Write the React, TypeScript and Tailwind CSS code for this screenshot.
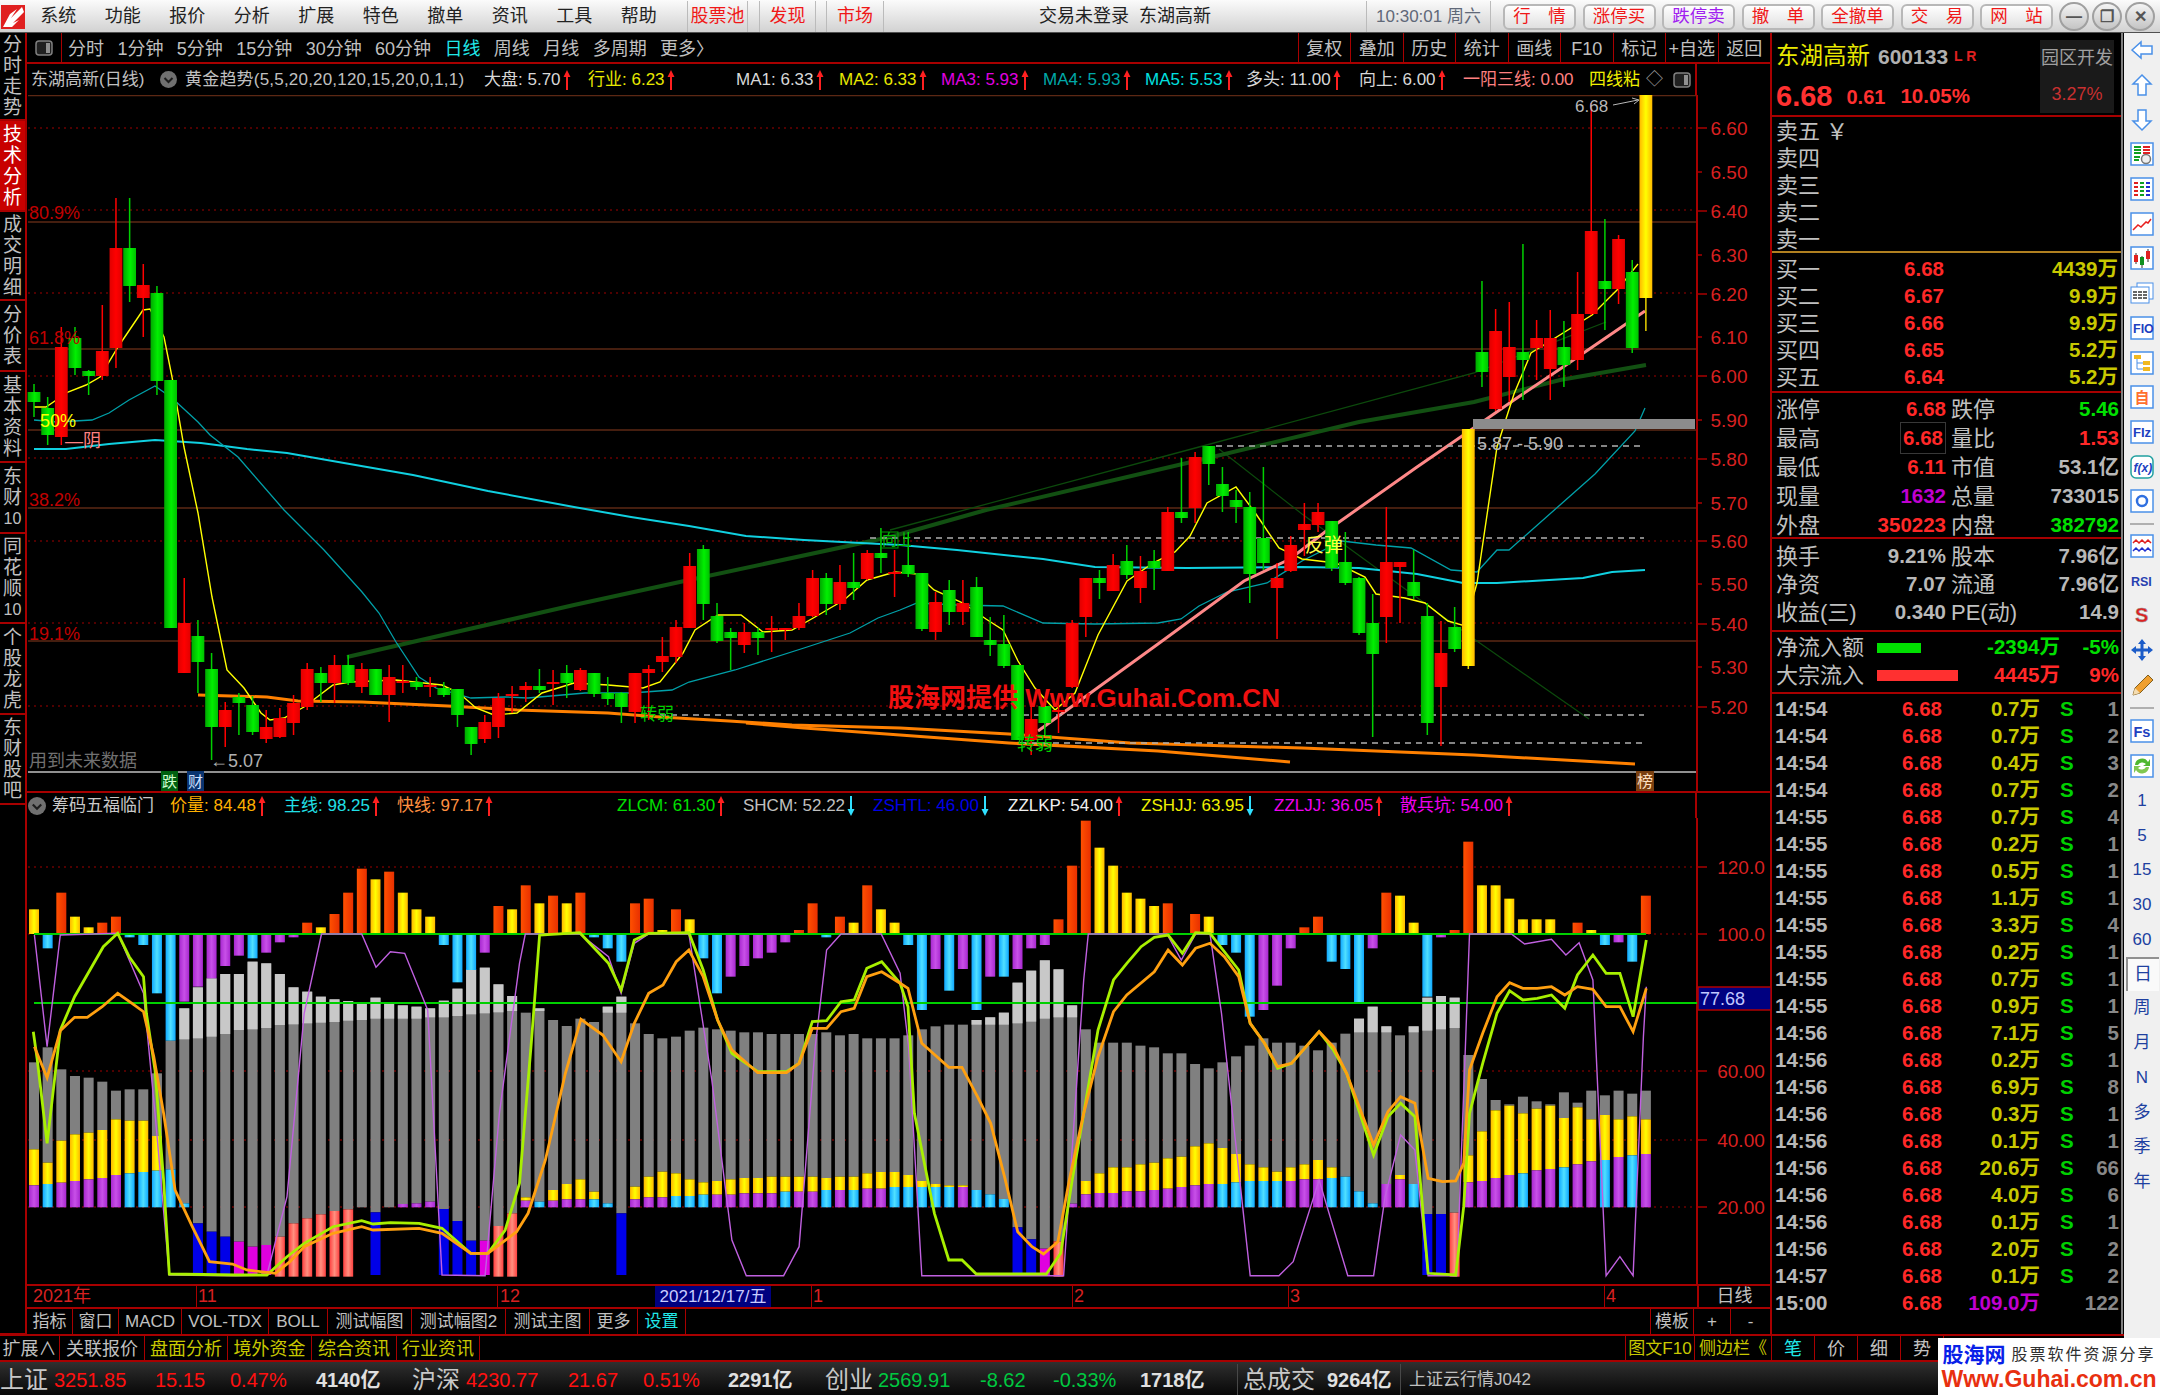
import type { ReactNode } from 'react'

const X = (i: number) => 34 + 13.66 * i

// [colour, wickTop, bodyTop, bodyBottom, wickBottom] in page pixels
const candles: [string, number, number, number, number][] = [
  ['g',384,392,402,417],['g',397,408,435,445],['r',327,347,437,445],['g',327,338,368,375],['g',370,371,376,395],
  ['r',305,351,376,380],['r',198,248,348,368],['g',198,248,286,302],['r',264,285,298,337],['g',286,293,381,395],
  ['g',380,380,628,628],['r',578,623,673,673],['g',620,636,662,693],['g',653,669,727,760],['r',702,710,727,747],
  ['g',693,697,703,735],['g',696,705,732,735],['r',710,727,739,743],['r',708,718,737,738],['r',695,703,723,735],
  ['r',663,669,707,710],['g',667,673,683,702],['r',655,665,683,703],['g',655,665,683,685],['r',663,669,687,693],
  ['g',669,669,695,695],['r',665,677,695,722],['r',665,681,683,693],['g',677,682,687,690],['r',677,685,686,697],
  ['g',682,688,695,697],['g',689,689,715,727],['g',727,727,744,755],['r',715,722,739,743],['r',693,698,727,738],
  ['r',686,694,695,713],['r',682,686,690,702],['g',669,686,690,693],['r',670,682,683,705],['g',665,673,683,698],
  ['r',668,670,690,691],['g',673,673,694,697],['g',677,693,699,705],['g',692,693,707,723],['r',673,673,712,723],
  ['r',665,669,673,720],['r',637,656,662,672],['r',620,627,657,663],['r',553,566,628,628],['g',545,549,604,620],
  ['g',603,616,641,643],['g',628,632,638,670],['r',623,632,645,653],['g',628,632,638,655],['r',616,628,629,652],
  ['r',628,628,629,640],['r',603,616,628,630],['r',570,578,616,617],['g',573,578,604,615],['r',565,582,604,610],
  ['g',553,582,588,600],['r',550,553,579,580],['g',528,553,558,573],['r',550,572,573,597],['g',532,565,574,577],
  ['g',573,573,629,631],['r',592,602,632,640],['g',580,590,612,625],['r',580,603,612,625],['g',577,587,637,637],
  ['g',617,640,645,656],['g',615,644,666,668],['g',665,665,740,740],['r',703,719,740,755],['g',701,706,723,735],
  ['r',695,710,712,733],['r',620,623,687,688],['r',578,578,617,637],['g',570,578,583,599],['r',554,565,591,591],
  ['g',545,561,575,579],['r',556,571,588,603],['g',550,561,568,590],['r',507,512,571,571],['g',458,512,518,523],
  ['r',452,457,508,523],['g',446,446,464,485],['g',467,484,496,512],['g',490,500,507,523],['g',492,507,574,603],
  ['g',467,538,563,570],['r',563,578,588,639],['r',536,545,571,572],['r',503,524,530,556],['r',503,512,525,532],
  ['g',521,521,568,571],['g',532,562,583,585],['g',577,578,633,635],['g',594,623,654,737],['r',507,562,617,643],
  ['r',562,562,567,623],['g',550,582,596,599],['g',603,616,723,735],['r',621,653,687,746],['g',607,627,649,652],
  ['y',429,429,666,669],['g',281,352,372,387],['r',309,331,409,411],['r',302,347,377,402],['g',244,352,360,400],
  ['r',320,338,348,380],['r',310,338,369,400],['g',321,347,365,387],['r',272,314,360,370],['r',103,231,314,315],
  ['g',219,281,289,330],['r',235,239,289,304],['g',260,272,348,353],['y',95,95,298,331],
]

const volume = 'y388 c505 o338 y410 y442 o428 o410 c472 c495 c640 c782 p665 p620 p595 p558 p527 c535 p518 p487 p472 o428 y442 o402 o338 o266 y298 o275 y338 y388 y410 c495 c607 c570 p518 o378 y388 o316 y370 o347 y370 o338 c472 c505 c545 o370 o356 y450 o388 y418 c535 c640 p590 p558 p535 p518 p487 o450 o370 c472 o410 y428 o316 y388 y428 c495 c690 p567 c632 p567 c690 p590 c590 p567 p505 p495 o418 o257 o122 y203 y257 y338 y356 y378 o370 n o402 y410 c495 c518 c710 p690 p617 p505 o442 o410 c545 c567 c668 p505 o338 y347 y428 c650 p472 o450 o185 y316 y316 y356 y418 y418 y418 n o428 y450 c495 p487 c545 o347'.split(' ')

// [gray top, light gray end, yellow top, colour top, colour]
const stacks: [number, number, number, number, string][] = [
  [847,0,1108,1216,'p'],[802,0,1148,1212,'c'],[868,0,1082,1208,'p'],[888,0,1063,1203,'p'],[893,0,1058,1198,'p'],
  [905,0,1050,1194,'p'],[932,0,1018,1185,'p'],[928,0,1022,1180,'c'],[928,0,1022,1176,'c'],[880,0,1068,1172,'c'],
  [782,0,0,1168,'c'],[685,778,0,1270,'c'],[622,775,0,1330,'b'],[595,770,0,1355,'b'],[582,762,0,1370,'b'],
  [582,750,0,1385,'m'],[545,748,0,1400,'m'],[550,744,0,1395,'m'],[582,735,0,1370,'k'],[622,733,0,1330,'k'],
  [635,730,0,1315,'k'],[650,728,0,1303,'k'],[658,726,0,1293,'k'],[663,722,0,1288,'k'],[670,720,0,1282,'n'],
  [653,716,0,1297,'b'],[670,716,0,1282,'n'],[676,716,0,1272,'p'],[680,716,0,1270,'p'],[685,712,0,1265,'p'],
  [662,712,0,1287,'b'],[626,708,0,1323,'b'],[568,703,0,1382,'b'],[563,700,0,1382,'m'],[613,697,0,1338,'k'],
  [648,693,0,1300,'k'],[698,0,1252,1262,'p'],[685,693,0,1265,'c'],[720,0,1230,1262,'p'],[738,0,1212,1258,'p'],
  [716,0,1198,1258,'p'],[726,0,1235,1258,'c'],[680,698,0,1270,'c'],[650,698,0,1300,'b'],[730,0,1220,1258,'p'],
  [762,0,1190,1252,'p'],[775,0,1175,1252,'p'],[770,0,1180,1248,'c'],[752,0,1198,1248,'c'],[743,0,1207,1244,'c'],
  [748,0,1203,1244,'p'],[752,0,1198,1244,'p'],[757,0,1194,1240,'p'],[757,0,1194,1240,'p'],[762,0,1190,1240,'p'],
  [762,0,1190,1235,'c'],[762,0,1190,1235,'p'],[762,0,1190,1235,'p'],[757,0,1194,1230,'c'],[766,0,1190,1230,'p'],
  [762,0,1190,1230,'c'],[775,0,1180,1226,'p'],[775,0,1176,1226,'p'],[775,0,1176,1221,'c'],[766,0,1185,1221,'c'],
  [748,0,1203,1221,'c'],[739,0,1212,1221,'c'],[734,0,1216,1221,'c'],[734,0,1216,1221,'p'],[720,734,0,1230,'c'],
  [712,734,0,1243,'c'],[698,734,0,1257,'c'],[608,730,0,1342,'b'],[572,725,0,1378,'b'],[541,716,0,1406,'m'],
  [568,712,0,1384,'k'],[676,712,0,1271,'p'],[748,0,1203,1243,'p'],[788,0,1180,1239,'p'],[788,0,1162,1239,'p'],
  [788,0,1162,1234,'p'],[797,0,1153,1234,'p'],[802,0,1148,1230,'p'],[820,0,1135,1226,'p'],[820,0,1130,1221,'p'],
  [852,0,1099,1216,'p'],[865,0,1090,1212,'p'],[847,0,1104,1212,'c'],[829,0,1122,1207,'c'],[797,0,1153,1203,'c'],
  [775,0,1162,1203,'c'],[788,0,1175,1203,'c'],[788,0,1162,1203,'p'],[797,0,1153,1198,'p'],[811,0,1140,1198,'p'],
  [788,0,1162,1194,'c'],[761,0,1190,1190,'c'],[716,757,0,1234,'c'],[680,757,0,1270,'c'],[739,757,0,1212,'p'],
  [766,0,1185,1198,'p'],[739,757,0,1212,'c'],[653,752,0,1302,'b'],[648,748,0,1302,'b'],[653,744,0,1298,'k'],
  [825,0,1126,1207,'p'],[897,0,1054,1203,'p'],[960,0,991,1194,'p'],[973,0,977,1185,'p'],[950,0,1000,1180,'c'],
  [964,0,986,1171,'p'],[973,0,977,1167,'p'],[937,0,1014,1162,'c'],[968,0,982,1153,'p'],[932,0,1018,1144,'p'],
  [946,0,1005,1140,'c'],[932,0,1018,1131,'p'],[941,0,1009,1126,'c'],[932,0,1018,1122,'p'],
]

const fromLeft = (s: string) =>
  s.split(' ').map(p => { const [a, b] = p.split(',').map(Number); return `${(a / 1.742).toFixed(1)},${(780 + b / 3).toFixed(1)}` }).join(' ')
const fromRight = (s: string) =>
  s.split(' ').map(p => { const [a, b] = p.split(',').map(Number); return `${(900 + a / 1.742).toFixed(1)},${(780 + b / 3).toFixed(1)}` }).join(' ')

const orangeK = fromLeft('60,800 82,893 105,752 130,712 152,712 178,680 205,640 230,670 250,695 268,830 285,1000 305,1230 335,1340 365,1445 405,1452 430,1470 480,1480 505,1445 530,1400 580,1360 630,1340 650,1350 730,1345 770,1360 820,1420 850,1420 900,1355 920,1300 950,1140 985,880 1012,718 1050,765 1082,845 1105,730 1130,640 1155,615 1178,545 1200,510 1225,590 1250,720 1275,810 1320,878 1370,878 1392,850 1415,745 1440,745 1465,695 1488,685 1510,590 1536,575 1568,610') + ' ' +
  fromRight('14,625 38,790 85,862 108,862 135,950 158,1030 182,1190 205,1355 230,1400 250,1422 275,1385 295,1200 320,1000 345,830 372,695 395,645 443,575 467,510 492,555 515,505 540,490 565,530 590,590 610,730 635,790 658,860 682,850 730,755 755,800 778,880 825,1095 850,995 872,950 897,970 920,1195 945,1205 968,1203 982,1150 992,870 1015,760 1040,650 1062,608 1085,625 1110,625 1135,620 1158,645 1180,620 1207,628 1230,680 1254,680 1277,755 1300,625')
const limeK = fromLeft('58,755 65,840 82,1090 105,750 130,650 180,500 205,460 225,530 250,590 255,700 270,870 285,1200 295,1482 410,1485 465,1485 500,1430 530,1390 580,1340 630,1322 650,1332 680,1328 730,1330 770,1345 820,1420 850,1420 880,1350 905,1210 925,800 940,465 1010,458 1060,550 1082,630 1105,480 1130,460 1200,458 1225,570 1250,720 1275,820 1320,875 1370,875 1392,850 1415,725 1440,722 1465,665 1488,660 1510,565 1536,545 1568,610') + ' ' +
  fromRight('14,680 25,1000 60,1300 85,1440 108,1440 133,1482 255,1482 280,1420 300,1200 325,950 345,750 372,600 395,550 420,500 443,472 467,465 492,520 515,458 540,460 590,570 610,730 635,790 658,865 682,850 730,755 755,810 778,880 825,1125 850,1010 872,970 897,1010 920,1480 968,1485 982,1280 992,1000 1015,850 1040,700 1062,632 1085,660 1110,655 1135,645 1158,685 1180,585 1207,525 1230,580 1254,580 1277,710 1300,480')
const purpleK = fromLeft('60,465 82,800 105,465 205,460 250,640 270,1000 295,1485 410,1487 465,1485 500,1250 530,700 560,462 630,462 655,562 680,515 705,520 745,690 770,1485 845,1487 870,1000 905,550 915,462 1010,462 1060,530 1082,640 1105,490 1130,462 1200,462 1240,900 1275,1380 1300,1487 1365,1487 1392,1400 1420,800 1440,510 1465,462 1535,462 1568,580') + ' ' +
  fromRight('15,800 38,1487 285,1487 320,600 328,462 465,462 490,540 515,462 540,462 560,700 610,1487 660,1487 685,1445 730,1200 780,1487 825,1487 845,1250 872,1065 897,1110 920,1487 970,1487 985,800 992,462 1065,462 1088,492 1135,478 1160,525 1183,488 1207,600 1230,1487 1254,1430 1277,1487 1295,770 1300,620')

const maYellow = '34,407 46,407 68,392 86,385 100,377 118,347 143,310 150,309 164,337 172,377 184,447 198,513 212,597 227,670 244,688 261,713 270,720 284,718 304,707 333,685 350,682 396,680 442,685 459,693 476,708 494,715 517,713 542,693 574,683 608,685 643,688 660,682 683,653 695,630 718,615 741,615 763,632 792,630 815,617 844,600 867,580 895,572 917,574 934,590 963,603 986,619 1003,630 1018,661 1035,688 1055,710 1075,693 1098,635 1127,581 1153,563 1175,552 1190,536 1207,503 1236,487 1256,514 1279,548 1302,559 1336,563 1365,577 1376,594 1405,598 1425,603 1448,621 1465,626 1477,583 1497,447 1514,394 1531,353 1592,315 1618,289 1638,264'
const maTeal = '34,420 57,422 92,420 109,413 129,400 155,386 172,398 198,422 210,435 238,457 284,510 324,550 362,592 379,613 396,642 419,677 436,688 471,698 505,697 528,698 585,693 631,693 672,690 689,682 735,670 804,648 850,633 878,618 900,610 917,603 957,605 1003,606 1043,623 1095,624 1158,623 1181,619 1199,606 1227,592 1267,583 1302,561 1342,541 1376,545 1411,548 1451,570 1477,572 1497,550 1509,550 1560,505 1595,474 1635,431 1645,408'
const maCyan = '34,449 66,449 109,444 155,440 201,443 247,449 287,453 344,463 413,475 488,491 574,507 631,517 689,526 746,536 804,540 861,543 900,545 957,550 1043,559 1095,567 1187,568 1302,567 1359,568 1417,574 1463,583 1497,583 1549,580 1583,578 1612,572 1645,570'
const orangeA = '198,695 267,697 298,701 362,702 448,706 517,710 608,713 660,717 729,721 792,725 900,728 1009,734 1130,743 1302,748 1474,755 1635,764'
const orangeB = '746,723 804,728 900,735 1009,743 1158,751 1290,762'
const pinkLine = '1038,731 1158,644 1244,581 1290,559 1325,532 1417,467 1465,434 1514,400 1566,365 1645,311'
const greenThick = '347,657 574,605 689,580 890,537 986,510 1187,463 1359,422 1474,402 1560,380 1646,365'
const greenThin = '890,530 1199,447 1474,373 1606,322'
const greenDown = '1219,449 1302,514 1474,639 1589,719'

const dotted = [128, 210, 293, 376, 458, 541, 623, 706]
const solid = [222, 349, 430, 508, 641]
const priceAxis: [string, number][] = [['6.60',128],['6.50',172],['6.40',211],['6.30',255],['6.20',294],['6.10',337],['6.00',376],['5.90',420],['5.80',459],['5.70',503],['5.60',541],['5.50',584],['5.40',624],['5.30',667],['5.20',707]]

const ChartDefs = () => (
  <defs>
    <linearGradient id="cr"><stop offset="0" stopColor="#e00000" /><stop offset="0.5" stopColor="#ff0000" /><stop offset="1" stopColor="#e00000" /></linearGradient>
    <linearGradient id="cg"><stop offset="0" stopColor="#00a800" /><stop offset="0.55" stopColor="#00f000" /><stop offset="1" stopColor="#00c000" /></linearGradient>
    <linearGradient id="cy"><stop offset="0" stopColor="#ffb800" /><stop offset="0.5" stopColor="#ffff00" /><stop offset="1" stopColor="#ffb800" /></linearGradient>
    <linearGradient id="bo"><stop offset="0" stopColor="#ff5000" /><stop offset="1" stopColor="#e83000" /></linearGradient>
    <linearGradient id="bc"><stop offset="0" stopColor="#10a8ff" /><stop offset="0.5" stopColor="#50e0ff" /><stop offset="1" stopColor="#10a8ff" /></linearGradient>
    <linearGradient id="bp"><stop offset="0" stopColor="#a828d0" /><stop offset="0.5" stopColor="#c850e8" /><stop offset="1" stopColor="#a828d0" /></linearGradient>
    <linearGradient id="bk"><stop offset="0" stopColor="#ff4040" /><stop offset="0.5" stopColor="#ff9080" /><stop offset="1" stopColor="#ff4040" /></linearGradient>
  </defs>
)

function PriceChart() {
  return (
    <svg viewBox="27 95 1745 696" className="block h-[696px] w-[1745px] shrink-0">
      <ChartDefs />
      {dotted.map(y => <line key={y} x1="28" x2="1697" y1={y} y2={y} stroke="#a00000" strokeDasharray="2 4" />)}
      {solid.map(y => <line key={y} x1="28" x2="1697" y1={y} y2={y} stroke="#5c2814" strokeWidth="1.5" />)}
      <line x1="28" x2="1697" y1="95.5" y2="95.5" stroke="#5c2814" strokeWidth="1.5" />
      <line x1="1697" x2="1697" y1="95" y2="791" stroke="#a80000" strokeWidth="2" />
      {priceAxis.map(([t, y], i) => (
        <g key={t}>
          <line x1="1697" x2={i % 2 ? 1702 : 1707} y1={y} y2={y} stroke="#a80000" strokeWidth="1.5" />
          <text x="1729" y={y + 7} textAnchor="middle" fontSize="19" fill="#d82020">{t}</text>
        </g>
      ))}
      <line x1="28" x2="1696" y1="772" y2="772" stroke="#909090" strokeWidth="2" />
      <polyline points={greenThin} fill="none" stroke="#0c4a0c" strokeWidth="1.3" />
      <polyline points={greenDown} fill="none" stroke="#0c4a0c" strokeWidth="1.2" />
      <polyline points={greenThick} fill="none" stroke="#125012" strokeWidth="4" />
      <polyline points={maCyan} fill="none" stroke="#10d0e0" strokeWidth="2" />
      <polyline points={maTeal} fill="none" stroke="#00a0a8" strokeWidth="1.3" />
      <polyline points={orangeA} fill="none" stroke="#ff8000" strokeWidth="3" />
      <polyline points={orangeB} fill="none" stroke="#ff8000" strokeWidth="3" />
      <polyline points={pinkLine} fill="none" stroke="#ff8888" strokeWidth="3" />
      <polyline points={maYellow} fill="none" stroke="#ffff00" strokeWidth="1.4" />
      {[[1216, 446], [870, 538], [660, 715], [1020, 743]].map(([x, y]) => (
        <line key={y} x1={x} x2="1644" y1={y} y2={y} stroke="#b0b0b0" strokeWidth="1.5" strokeDasharray="6 5" />
      ))}
      <rect x="1473" y="419" width="222" height="10" fill="#8c8c8c" />
      {candles.map(([c, wt, bt, bb, wb], i) => {
        const x = X(i)
        const fill = c === 'r' ? '#ff0000' : c === 'g' ? '#00d000' : '#e8d000'
        return (
          <g key={i}>
            <rect x={x - 0.75} y={wt} width="1.5" height={wb - wt} fill={fill} />
            <rect x={x - 6.4} y={bt} width="12.8" height={Math.max(bb - bt, 2)} fill={`url(#c${c})`} />
          </g>
        )
      })}
      <text x="29" y="219" fontSize="18" fill="#c00000">80.9%</text>
      <text x="29" y="344" fontSize="18" fill="#c00000">61.8%</text>
      <text x="40" y="427" fontSize="18" fill="#ffff00">50%</text>
      <text x="65" y="447" fontSize="18" fill="#ff8080">—阴</text>
      <text x="29" y="506" fontSize="18" fill="#c00000">38.2%</text>
      <text x="29" y="640" fontSize="18" fill="#c00000">19.1%</text>
      <text x="29" y="767" fontSize="18" fill="#707070">用到未来数据</text>
      <text x="210" y="767" fontSize="18" fill="#b0b0b0">←5.07</text>
      <text x="640" y="720" fontSize="17" fill="#00d000">转弱</text>
      <rect x="881" y="532" width="17" height="16" fill="none" stroke="#00a000" />
      <text x="882" y="545" fontSize="15" fill="#00c000">向上</text>
      <text x="1305" y="552" fontSize="19" fill="#ffff40">反弹</text>
      <text x="1017" y="750" fontSize="18" fill="#00d000">转弱</text>
      <text x="1477" y="450" fontSize="18" fill="#b8b8b8">5.87 - 5.90</text>
      <text x="1575" y="112" fontSize="17" fill="#b8b8b8">6.68</text>
      <path d="M1613 105 L1638 100 M1632 98 L1639 100 L1634 104" fill="none" stroke="#b8b8b8" />
      <text x="888" y="707" fontSize="26" fontWeight="700" fill="#f01010">股海网提供 Www.Guhai.Com.CN</text>
      <rect x="161" y="771" width="17" height="20" fill="#006010" />
      <text x="162" y="787" fontSize="15" fill="#d0ffd0">跌</text>
      <rect x="187" y="771" width="17" height="20" fill="#0a3470" />
      <text x="188" y="787" fontSize="15" fill="#d0e0ff">财</text>
      <rect x="1636" y="771" width="18" height="20" fill="#7a4010" />
      <text x="1637" y="787" fontSize="16" fill="#ffe0c0">榜</text>
    </svg>
  )
}

function LowerChart() {
  const y = (z: number) => 780 + z / 3
  const bottom = 1485
  return (
    <svg viewBox="27 818 1745 466" className="block h-[466px] w-[1745px] shrink-0">
      <ChartDefs />
      {[867, 934, 1071, 1140, 1207].map(v => <line key={v} x1="28" x2="1697" y1={v} y2={v} stroke="#a00000" strokeDasharray="2 4" />)}
      <line x1="1697" x2="1697" y1="818" y2="1284" stroke="#a80000" strokeWidth="2" />
      {[[867, '120.0'], [934, '100.0'], [1071, '60.00'], [1140, '40.00'], [1207, '20.00']].map(([v, t]) => (
        <g key={t}>
          <line x1="1697" x2="1707" y1={v} y2={v} stroke="#a80000" strokeWidth="1.5" />
          <text x="1741" y={Number(v) + 7} textAnchor="middle" fontSize="19" fill="#d82020">{t}</text>
        </g>
      ))}
      {stacks.map(([g, l, yl, c, k], i) => {
        const x = X(i) - 5
        const grayEnd = yl || c
        return (
          <g key={i}>
            <rect x={x} y={y(g)} width="10" height={(grayEnd - g) / 3} fill="#808080" />
            {l > 0 && <rect x={x} y={y(g)} width="10" height={(l - g) / 3} fill="#c8c8c8" />}
            {yl > 0 && <rect x={x} y={y(yl)} width="10" height={(c - yl) / 3} fill="url(#cy)" />}
            {k === 'p' && <rect x={x} y={y(c)} width="10" height={(1282 - c) / 3} fill="url(#bp)" />}
            {k === 'c' && <rect x={x} y={y(c)} width="10" height={(1282 - c) / 3} fill="url(#bc)" />}
            {k === 'b' && <rect x={x} y={y(c)} width="10" height={(bottom - c) / 3} fill="#0000e8" />}
            {k === 'm' && <rect x={x} y={y(c)} width="10" height={(bottom - c) / 3} fill="#e000e0" />}
            {k === 'k' && <rect x={x} y={y(c)} width="10" height={(bottom + 5 - c) / 3} fill="url(#bk)" />}
          </g>
        )
      })}
      {volume.map((v, i) => {
        if (v === 'n') return null
        const k = v[0]
        const z = Number(v.slice(1))
        const x = X(i) - 5
        if (k === 'o' || k === 'y') return <rect key={i} x={x} y={y(z)} width="10" height={(462 - z) / 3} fill={k === 'o' ? 'url(#bo)' : 'url(#cy)'} />
        return <rect key={i} x={x} y={934} width="10" height={(z - 462) / 3} fill={k === 'c' ? 'url(#bc)' : 'url(#bp)'} />
      })}
      <line x1="34" x2="1646" y1="934" y2="934" stroke="#00d000" strokeWidth="2" />
      <line x1="34" x2="1697" y1="1003" y2="1003" stroke="#00d000" strokeWidth="2" />
      <polyline points={purpleK} fill="none" stroke="#c060e0" strokeWidth="1.4" />
      <polyline points={limeK} fill="none" stroke="#a8f000" strokeWidth="2.8" />
      <polyline points={orangeK} fill="none" stroke="#ffa010" strokeWidth="2.8" />
      <rect x="1698" y="987" width="73" height="23" fill="#000080" stroke="#b00000" strokeWidth="1.5" />
      <text x="1700" y="1005" fontSize="18" fill="#c0c8ff">77.68</text>
    </svg>
  )
}

const Up = () => (
  <svg width="8" height="20" viewBox="0 0 8 20" className="ml-[2px] shrink-0">
    <path d="M4 0 L7.5 7 H5 V20 H3 V7 H0.5 Z" fill="#ff2020" />
  </svg>
)
const Down = () => (
  <svg width="8" height="20" viewBox="0 0 8 20" className="ml-[2px] shrink-0">
    <path d="M4 20 L7.5 13 H5 V0 H3 V13 H0.5 Z" fill="#30e0ff" />
  </svg>
)
const Chevron = ({ size = 17 }: { size?: number }) => (
  <svg width={size} height={size} viewBox="0 0 17 17" className="shrink-0">
    <circle cx="8.5" cy="8.5" r="8.5" fill="#707070" />
    <path d="M4.5 7 L8.5 11 L12.5 7" fill="none" stroke="#1c1c1c" strokeWidth="2" />
  </svg>
)
const ToggleBox = () => (
  <svg width="18" height="16" viewBox="0 0 18 16" className="shrink-0">
    <rect x="1" y="1" width="16" height="14" rx="3" fill="#202020" stroke="#808080" strokeWidth="1.5" />
    <rect x="11" y="3" width="4" height="10" fill="#909090" />
  </svg>
)

const Logo = () => (
  <svg width="25" height="31" viewBox="0 0 25 31" className="shrink-0">
    <rect x="1" y="4" width="24" height="24" fill="#e02020" />
    <path d="M3 26 L10 13 L17 8 L11 17 L22 6 L24 11 L13 22 L19 19 L12 26 Z" fill="#ffffff" />
  </svg>
)

const menus = ['系统', '功能', '报价', '分析', '扩展', '特色', '撤单', '资讯', '工具', '帮助']
const actions = [['行　情', 'text-[#f01818]'], ['涨停买', 'text-[#f01818]'], ['跌停卖', 'text-[#a020f0]'], ['撤　单', 'text-[#f01818]'], ['全撤单', 'text-[#f01818]'], ['交　易', 'text-[#f01818]'], ['网　站', 'text-[#f01818]']]

function TitleBar() {
  return (
    <div className="flex h-[33px] shrink-0 items-center border-b border-[#505050] bg-gradient-to-b from-[#fbfbfb] to-[#d2d2d2] pt-[1px] text-[#222]">
      <div className="w-[26px] shrink-0"><Logo /></div>
      {menus.map(m => (
        <div key={m} className="w-[64.5px] shrink-0 text-center text-[18px]">{m}</div>
      ))}
      <div className="ml-[16px] flex h-full w-[61px] shrink-0 items-center justify-center border-x border-[#bbb] text-[18px] text-[#f01818]">股票池</div>
      <div className="ml-[11px] flex h-full w-[57px] shrink-0 items-center justify-center border-x border-[#bbb] text-[18px] text-[#f01818]">发现</div>
      <div className="ml-[10px] flex h-full w-[58px] shrink-0 items-center justify-center border-x border-[#bbb] text-[18px] text-[#f01818]">市场</div>
      <div className="flex-1 text-center text-[18px] text-[#222]">交易未登录&nbsp; 东湖高新</div>
      <div className="flex h-full w-[125px] shrink-0 items-center justify-center border-x border-[#bbb] text-[17px] text-[#606878]">10:30:01 周六</div>
      <div className="ml-[12px] flex shrink-0 gap-[6.5px]">
        {actions.map(([t, c]) => (
          <div key={t} className={`flex h-[26px] w-[73px] items-center justify-center rounded-[6px] border-2 border-[#b8b8b8] bg-gradient-to-b from-[#ffffff] to-[#e0e0e0] text-[17.5px] ${c}`}>{t}</div>
        ))}
      </div>
      <div className="ml-[6px] flex shrink-0 gap-[3px] pr-[5px]">
        {['—', '❐', '✕'].map(t => (
          <div key={t} className="flex h-[29px] w-[30px] items-center justify-center rounded-full border-2 border-[#a0a0a0] bg-gradient-to-b from-[#f4f4f4] to-[#c4c4c4] text-[16px] font-bold text-[#555]">{t}</div>
        ))}
      </div>
    </div>
  )
}

const vtabs: { chars: string[]; h: string; active?: boolean }[] = [
  { chars: ['分', '时', '走', '势'], h: 'h-[88px]' },
  { chars: ['技', '术', '分', '析'], h: 'h-[91px]', active: true },
  { chars: ['成', '交', '明', '细'], h: 'h-[89px]' },
  { chars: ['分', '价', '表'], h: 'h-[71px]' },
  { chars: ['基', '本', '资', '料'], h: 'h-[91px]' },
  { chars: ['东', '财', '10'], h: 'h-[71px]' },
  { chars: ['同', '花', '顺', '10'], h: 'h-[90px]' },
  { chars: ['个', '股', '龙', '虎'], h: 'h-[91px]' },
  { chars: ['东', '财', '股', '吧'], h: 'h-[90px]' },
]

function LeftTabs() {
  return (
    <div className="flex h-full w-[27px] shrink-0 flex-col border-r-2 border-b border-[#a80000]">
      {vtabs.map(t => (
        <div
          key={t.chars.join('')}
          className={`flex w-full shrink-0 flex-col items-center justify-center border-b-2 border-[#a80000] text-[19px] leading-[21px] ${t.h} ${t.active ? 'bg-[#c80000] text-white' : 'text-[#c0c0c0]'}`}
        >
          {t.chars.map((c, i) => <span key={i} className={c === '10' ? 'text-[16px]' : ''}>{c}</span>)}
        </div>
      ))}
    </div>
  )
}

const periods = ['分时', '1分钟', '5分钟', '15分钟', '30分钟', '60分钟', '日线', '周线', '月线', '多周期', '更多〉']
const tools = ['复权', '叠加', '历史', '统计', '画线', 'F10', '标记', '+自选', '返回']

function Toolbar() {
  return (
    <div className="flex h-[31px] shrink-0 items-center border-b-2 border-[#a80000] text-[18px] text-[#c0c0c0]">
      <div className="flex h-full w-[35px] shrink-0 items-center justify-center border-r border-[#a80000]"><ToggleBox /></div>
      <div className="ml-[6px] flex gap-[13.4px] pt-[3px]">
        {periods.map(p => <span key={p} className={p === '日线' ? 'text-[#20e8e8]' : ''}>{p}</span>)}
      </div>
      <div className="ml-auto flex h-full">
        {tools.map(t => <div key={t} className="flex h-full w-[52.5px] items-center justify-center border-l border-[#a80000] pt-[3px]">{t}</div>)}
      </div>
    </div>
  )
}

const Metric = ({ name, value, color, w, arrow = 'up' }: { name: string; value: string; color: string; w: string; arrow?: 'up' | 'down' | 'none' }) => (
  <div className={`flex shrink-0 items-center whitespace-nowrap ${w} ${color}`}>
    <span>{name}: {value}</span>
    {arrow === 'up' && <Up />}
    {arrow === 'down' && <Down />}
  </div>
)

function HeaderRow() {
  return (
    <div className="flex h-[31px] shrink-0 items-center text-[17px] text-[#c0c0c0]">
      <div className="flex h-full w-[1670px] shrink-0 items-center border-r-2 border-[#a80000] pl-[4px]">
        <span className="w-[129px] shrink-0 whitespace-nowrap">东湖高新(日线)</span>
        <Chevron />
        <span className="ml-[8px] w-[299px] shrink-0 whitespace-nowrap tracking-[0.2px]">黄金趋势(5,5,20,20,120,15,20,0,1,1)</span>
        <Metric name="大盘" value="5.70" color="text-[#d8d8d8]" w="w-[104px]" />
        <Metric name="行业" value="6.23" color="text-[#e8e800]" w="w-[148px]" />
        <Metric name="MA1" value="6.33" color="text-[#d8d8d8]" w="w-[103px]" />
        <Metric name="MA2" value="6.33" color="text-[#e8e800]" w="w-[102px]" />
        <Metric name="MA3" value="5.93" color="text-[#e000e0]" w="w-[102px]" />
        <Metric name="MA4" value="5.93" color="text-[#00a8a8]" w="w-[102px]" />
        <Metric name="MA5" value="5.53" color="text-[#00e0e0]" w="w-[101px]" />
        <Metric name="多头" value="11.00" color="text-[#d8d8d8]" w="w-[113px]" />
        <Metric name="向上" value="6.00" color="text-[#d8d8d8]" w="w-[104px]" />
        <Metric name="一阳三线" value="0.00" color="text-[#ff8080]" w="w-[126px]" arrow="none" />
        <span className="w-[57px] shrink-0 text-[#f0f000]">四线粘</span>
        <span className="w-[27px] shrink-0 text-[#a0a0a0]">◇</span>
        <ToggleBox />
      </div>
    </div>
  )
}

function LowerTitle() {
  return (
    <div className="flex h-[25px] shrink-0 items-center text-[17px]">
      <div className="flex h-full w-[1670px] shrink-0 items-center border-r-2 border-[#a80000] pl-[1px]">
        <Chevron size={18} />
        <span className="ml-[6px] w-[118px] shrink-0 whitespace-nowrap text-[#c8c8c8]">筹码五福临门</span>
        <Metric name="价量" value="84.48" color="text-[#ffb000]" w="w-[114px]" />
        <Metric name="主线" value="98.25" color="text-[#20e0e8]" w="w-[113px]" />
        <Metric name="快线" value="97.17" color="text-[#ff9040]" w="w-[220px]" />
        <Metric name="ZLCM" value="61.30" color="text-[#00e000]" w="w-[126px]" />
        <Metric name="SHCM" value="52.22" color="text-[#c0c0c0]" w="w-[130px]" arrow="down" />
        <Metric name="ZSHTL" value="46.00" color="text-[#0000e8]" w="w-[135px]" arrow="down" />
        <Metric name="ZZLKP" value="54.00" color="text-[#f0f0f0]" w="w-[133px]" />
        <Metric name="ZSHJJ" value="63.95" color="text-[#f0f000]" w="w-[133px]" arrow="down" />
        <Metric name="ZZLJJ" value="36.05" color="text-[#f000f0]" w="w-[126px]" />
        <Metric name="散兵坑" value="54.00" color="text-[#f000f0]" w="w-[130px]" />
      </div>
    </div>
  )
}

function DateAxis() {
  return (
    <div className="flex h-[23px] shrink-0 border-b-2 border-[#a80000] text-[18px] text-[#d82020]">
      <div className="flex w-[169px] shrink-0 items-center pl-[6px]">2021年</div>
      <div className="flex w-[301px] shrink-0 items-center border-l border-[#a80000] pl-[1px]">11</div>
      <div className="flex w-[158px] shrink-0 items-center border-l border-[#a80000] pl-[2px]">12</div>
      <div className="flex w-[116px] shrink-0 items-center justify-center whitespace-nowrap bg-[#000080] text-[17px] text-[#c8ccff]">2021/12/17/五</div>
      <div className="w-[40px] shrink-0" />
      <div className="flex w-[261px] shrink-0 items-center border-l border-[#a80000] pl-[1px]">1</div>
      <div className="flex w-[216px] shrink-0 items-center border-l border-[#a80000] pl-[1px]">2</div>
      <div className="flex w-[316px] shrink-0 items-center border-l border-[#a80000] pl-[1px]">3</div>
      <div className="flex w-[93px] shrink-0 items-center border-l border-[#a80000] pl-[1px]">4</div>
      <div className="flex flex-1 items-center justify-center border-l-2 border-[#a80000] text-[#c0c0c0]">日线</div>
    </div>
  )
}

const indTabs: [string, string][] = [['指标', 'w-[46px]'], ['窗口', 'w-[46px]'], ['MACD', 'w-[63px]'], ['VOL-TDX', 'w-[87px]'], ['BOLL', 'w-[59px]'], ['测试幅图', 'w-[84px]'], ['测试幅图2', 'w-[94px]'], ['测试主图', 'w-[84px]'], ['更多', 'w-[48px]'], ['设置', 'w-[48px]']]

function IndicatorTabs() {
  return (
    <div className="flex h-[25px] shrink-0 items-center text-[17px] text-[#c0c0c0]">
      {indTabs.map(([t, w]) => (
        <div key={t} className={`flex h-full shrink-0 items-center justify-center whitespace-nowrap border-r border-[#a80000] ${w} ${t === '设置' ? 'text-[#20e8e8]' : ''}`}>{t}</div>
      ))}
      <div className="ml-auto flex h-full">
        <div className="flex h-full w-[44px] items-center justify-center border-x border-[#a80000]">模板</div>
        <div className="flex h-full w-[37px] items-center justify-center border-r border-[#a80000]">+</div>
        <div className="flex h-full w-[39px] items-center justify-center">-</div>
      </div>
    </div>
  )
}

const Sell = ({ t }: { t: string }) => <div className="flex h-[27px] items-center whitespace-nowrap pt-[2px] pl-[4px] text-[#c0c0c0]">{t}</div>
const Buy = ({ t, p, a }: { t: string; p: string; a: string }) => (
  <div className="flex h-[27px] items-center pt-[3px] pl-[4px] pr-[3px]">
    <span className="w-[127px] shrink-0 text-[#c0c0c0]">{t}</span>
    <span className="w-[41px] shrink-0 text-right text-[20.5px] font-bold text-[#ff2828]">{p}</span>
    <span className="flex-1 text-right text-[20.5px] font-bold text-[#c8c800]">{a}</span>
  </div>
)
const Stat = ({ a, b, ac, c, d, dc, boxed }: { a: string; b: string; ac: string; c: string; d: string; dc: string; boxed?: boolean }) => (
  <div className="flex h-[29px] items-center pt-[3px] pl-[4px] pr-[2px]">
    <div className="flex w-[170px] shrink-0 items-center justify-between">
      <span className="text-[#c0c0c0]">{a}</span>
      <span className={`text-[20.5px] font-bold ${ac} ${boxed ? 'border border-[#383838] px-[2px]' : ''}`}>{b}</span>
    </div>
    <div className="ml-[5px] flex flex-1 items-center justify-between">
      <span className="text-[#c0c0c0]">{c}</span>
      <span className={`text-[20.5px] font-bold ${dc}`}>{d}</span>
    </div>
  </div>
)
const Stat3 = ({ a, b, c, d }: { a: string; b: string; c: string; d: string }) => (
  <div className="flex h-[28px] items-center pt-[2px] pl-[4px] pr-[2px]">
    <div className="flex w-[170px] shrink-0 items-center justify-between">
      <span className="whitespace-nowrap text-[#c0c0c0]">{a}</span>
      <span className="text-[20.5px] font-bold text-[#b8b8b8]">{b}</span>
    </div>
    <div className="ml-[5px] flex flex-1 items-center justify-between">
      <span className="whitespace-nowrap text-[#c0c0c0]">{c}</span>
      <span className="text-[20.5px] font-bold text-[#b8b8b8]">{d}</span>
    </div>
  </div>
)

const ticks: [string, string, string][] = [
  ['14:54','0.7万','1'],['14:54','0.7万','2'],['14:54','0.4万','3'],['14:54','0.7万','2'],['14:55','0.7万','4'],['14:55','0.2万','1'],
  ['14:55','0.5万','1'],['14:55','1.1万','1'],['14:55','3.3万','4'],['14:55','0.2万','1'],['14:55','0.7万','1'],['14:55','0.9万','1'],
  ['14:56','7.1万','5'],['14:56','0.2万','1'],['14:56','6.9万','8'],['14:56','0.3万','1'],['14:56','0.1万','1'],['14:56','20.6万','66'],
  ['14:56','4.0万','6'],['14:56','0.1万','1'],['14:56','2.0万','2'],['14:57','0.1万','2'],['15:00','109.0万','122'],
]

function QuotePanel() {
  return (
    <div className="flex h-full w-[351px] shrink-0 flex-col border-r-2 border-[#808080] text-[22px]">
      <div className="flex h-[84px] shrink-0 border-b-2 border-[#a80000]">
        <div className="flex w-[268px] shrink-0 flex-col pl-[4px]">
          <div className="flex h-[44px] items-center whitespace-nowrap pt-[3px]">
            <span className="text-[23.5px] text-[#e8e800]">东湖高新</span>
            <span className="ml-[8px] text-[21px] font-bold text-[#b0b0b0]">600133</span>
            <span className="ml-[6px] text-[14px] font-bold text-[#e02020]">L R</span>
          </div>
          <div className="flex h-[36px] items-center whitespace-nowrap pt-[3px] font-bold text-[#ff3030]">
            <span className="text-[29px]">6.68</span>
            <span className="ml-[14px] text-[20px]">0.61</span>
            <span className="ml-[15px] text-[20.5px]">10.05%</span>
          </div>
        </div>
        <div className="mt-[7px] flex h-[73px] w-[74px] shrink-0 flex-col items-center justify-around bg-[#1a1a1a] text-[18px]">
          <span className="text-[#a0a0a0]">园区开发</span>
          <span className="text-[#c83030]">3.27%</span>
        </div>
      </div>
      <div className="h-[136px] shrink-0 border-b-2 border-[#b08020]">
        <Sell t="卖五 ￥" /><Sell t="卖四" /><Sell t="卖三" /><Sell t="卖二" /><Sell t="卖一" />
      </div>
      <div className="h-[140px] shrink-0 border-b-2 border-[#a80000] pt-[1px]">
        <Buy t="买一" p="6.68" a="4439万" />
        <Buy t="买二" p="6.67" a="9.9万" />
        <Buy t="买三" p="6.66" a="9.9万" />
        <Buy t="买四" p="6.65" a="5.2万" />
        <Buy t="买五" p="6.64" a="5.2万" />
      </div>
      <div className="h-[146px] shrink-0 border-b-2 border-[#a80000]">
        <Stat a="涨停" b="6.68" ac="text-[#ff2828]" c="跌停" d="5.46" dc="text-[#00e000]" />
        <Stat a="最高" b="6.68" ac="text-[#ff2828]" c="量比" d="1.53" dc="text-[#ff2828]" boxed />
        <Stat a="最低" b="6.11" ac="text-[#ff2828]" c="市值" d="53.1亿" dc="text-[#b8b8b8]" />
        <Stat a="现量" b="1632" ac="text-[#c000d0]" c="总量" d="733015" dc="text-[#b8b8b8]" />
        <Stat a="外盘" b="350223" ac="text-[#ff2828]" c="内盘" d="382792" dc="text-[#00e000]" />
      </div>
      <div className="h-[93px] shrink-0 border-b-2 border-[#a80000] pt-[2px]">
        <Stat3 a="换手" b="9.21%" c="股本" d="7.96亿" />
        <Stat3 a="净资" b="7.07" c="流通" d="7.96亿" />
        <Stat3 a="收益(三)" b="0.340" c="PE(动)" d="14.9" />
      </div>
      <div className="h-[62px] shrink-0 border-b-2 border-[#a80000] pt-[2px]">
        <div className="flex h-[27px] items-center pl-[4px] pr-[2px]">
          <span className="w-[101px] shrink-0 whitespace-nowrap text-[#c0c0c0]">净流入额</span>
          <div className="h-[10px] w-[44px] shrink-0 bg-[#00e000]" />
          <span className="w-[139px] shrink-0 text-right text-[20.5px] font-bold text-[#00e000]">-2394万</span>
          <span className="flex-1 text-right text-[20.5px] font-bold text-[#00e000]">-5%</span>
        </div>
        <div className="flex h-[27px] items-center pt-[2px] pl-[4px] pr-[2px]">
          <span className="w-[101px] shrink-0 whitespace-nowrap text-[#c0c0c0]">大宗流入</span>
          <div className="h-[11px] w-[81px] shrink-0 bg-[#ff3030]" />
          <span className="w-[102px] shrink-0 text-right text-[20.5px] font-bold text-[#ff2828]">4445万</span>
          <span className="flex-1 text-right text-[20.5px] font-bold text-[#ff2828]">9%</span>
        </div>
      </div>
      <div className="flex-1 text-[20.5px] font-bold">
        {ticks.map(([t, a, n], i) => (
          <div key={i} className="flex h-[27px] items-center pt-[3px] pl-[3px] pr-[2px]">
            <span className="w-[56px] shrink-0 text-[#b8b8b8]">{t}</span>
            <span className="w-[111px] shrink-0 text-right text-[#ff2828]">6.68</span>
            <span className={`w-[98px] shrink-0 text-right ${t === '15:00' ? 'text-[#c000d0]' : 'text-[#c8c800]'}`}>{a}</span>
            <span className="ml-[20px] w-[16px] shrink-0 text-[#00d000]">{t === '15:00' ? '' : 'S'}</span>
            <span className="flex-1 text-right text-[#888]">{n}</span>
          </div>
        ))}
      </div>
    </div>
  )
}

const Frame = ({ children, stroke = '#4a90e8' }: { children: ReactNode; stroke?: string }) => (
  <svg width="24" height="24" viewBox="0 0 24 24">
    <rect x="1" y="1" width="22" height="22" fill="#fff" stroke={stroke} strokeWidth="1.5" />
    {children}
  </svg>
)
const Plain = ({ children }: { children: ReactNode }) => <svg width="24" height="24" viewBox="0 0 24 24">{children}</svg>
const arrowLine = { fill: '#fff', stroke: '#4a90e8', strokeWidth: 1.5 }

const sideIcons: ReactNode[] = [
  <Plain key="l"><path d="M2 12 L11 4 V8 H22 V16 H11 V20 Z" {...arrowLine} /></Plain>,
  <Plain key="u"><path d="M12 2 L21 11 H16 V22 H8 V11 H3 Z" {...arrowLine} /></Plain>,
  <Plain key="d"><path d="M12 22 L21 13 H16 V2 H8 V13 H3 Z" {...arrowLine} /></Plain>,
  <Frame key="a"><path d="M4 5H11M4 8H11M4 11H11" stroke="#10a020" strokeWidth="2" /><path d="M13 5H20M13 8H20M13 11H20" stroke="#e02020" strokeWidth="2" /><path d="M4 15H10M4 18H9" stroke="#10a020" strokeWidth="2" /><circle cx="16" cy="17" r="4.5" fill="#eee" stroke="#777" strokeWidth="1.5" /></Frame>,
  <Frame key="g"><path d="M4 6H8M4 10H8M4 14H8M4 18H8" stroke="#e02020" strokeWidth="2" /><path d="M10 6H14M10 10H14M10 14H14M10 18H14" stroke="#10a020" strokeWidth="2" /><path d="M16 6H20M16 10H20M16 14H20M16 18H20" stroke="#2030d0" strokeWidth="2" /></Frame>,
  <Frame key="c"><path d="M3 18 L8 13 L11 15 L16 10 L18 11 L21 7" fill="none" stroke="#e82020" strokeWidth="1.5" /></Frame>,
  <Frame key="k"><path d="M6 7V18M12 10V22M18 3V16" stroke="#333" /><rect x="4" y="9" width="4" height="7" fill="#e02020" /><rect x="10" y="11" width="4" height="8" fill="#109020" /><rect x="16" y="5" width="4" height="8" fill="#e02020" /></Frame>,
  <Plain key="w"><rect x="7" y="2" width="16" height="16" fill="#fff" stroke="#4a90e8" /><rect x="1" y="6" width="18" height="16" fill="#fff" stroke="#4a90e8" /><path d="M3 11H17M3 14H17M3 17H17" stroke="#666" strokeWidth="2" strokeDasharray="4 1" /></Plain>,
  <Frame key="f10"><text x="3" y="17" fontSize="12.5" fontWeight="700" fill="#2040c0">FIO</text></Frame>,
  <Frame key="t"><rect x="4" y="4" width="7" height="4" fill="#f0b820" /><rect x="13" y="10" width="7" height="4" fill="#f0b820" /><rect x="13" y="16" width="7" height="4" fill="#f0b820" /><path d="M7 8V18H13M7 12H13" fill="none" stroke="#4a90e8" /></Frame>,
  <Frame key="z"><text x="4.5" y="18" fontSize="15" fontWeight="700" fill="#ff7030">自</text></Frame>,
  <Frame key="f12"><text x="3" y="17" fontSize="13" fontWeight="700" fill="#2040c0">FIz</text></Frame>,
  <svg key="fx" width="24" height="24" viewBox="0 0 24 24"><rect x="1" y="1" width="22" height="22" rx="5" fill="#fff" stroke="#20a0a0" strokeWidth="1.5" /><text x="3.5" y="17" fontSize="12" fontStyle="italic" fontWeight="700" fill="#2040c0">f(x)</text></svg>,
  <Frame key="o"><circle cx="12" cy="12" r="5" fill="none" stroke="#3070e0" strokeWidth="2.5" /></Frame>,
]
const sideIcons2: ReactNode[] = [
  <Frame key="wv"><path d="M3 9 L6 6 L9 9 L12 6 L15 9 L18 6 L21 9" fill="none" stroke="#e02020" strokeWidth="1.5" /><path d="M3 17 L6 14 L9 17 L12 14 L15 17 L18 14 L21 17" fill="none" stroke="#2030d0" strokeWidth="1.5" /></Frame>,
  <Plain key="rsi"><text x="1" y="17" fontSize="12.5" fontWeight="700" fill="#2840b0">RSI</text></Plain>,
  <Plain key="s"><text x="5" y="19" fontSize="20" fontWeight="700" fill="#e02020" stroke="#999" strokeWidth="0.5">S</text></Plain>,
  <Plain key="mv"><path d="M12 1 L16 6 H13.5 V10.5 H18 V8 L23 12 L18 16 V13.5 H13.5 V18 H16 L12 23 L8 18 H10.5 V13.5 H6 V16 L1 12 L6 8 V10.5 H10.5 V6 H8 Z" fill="#1c5cc8" /></Plain>,
  <Plain key="pn"><path d="M3 22 L5 15 L18 2 L23 7 L10 20 Z" fill="#f0a030" stroke="#806020" /><path d="M3 22 L5 15 L10 20 Z" fill="#f4dcb0" /></Plain>,
]
const sideIcons3: ReactNode[] = [
  <Frame key="fs"><text x="3.5" y="17.5" fontSize="14.5" fontWeight="700" fill="#2040c0">Fs</text></Frame>,
  <Frame key="rf"><path d="M5 11 A7 7 0 0 1 18 8 L20 5 V12 H13 L16 10 A5 5 0 0 0 8 11 Z" fill="#50b830" /><path d="M19 13 A7 7 0 0 1 6 16 L4 19 V12 H11 L8 14 A5 5 0 0 0 16 13 Z" fill="#80c850" /></Frame>,
]

const Slot = ({ children }: { children: ReactNode }) => <div className="flex h-[34.7px] w-full shrink-0 items-center justify-center">{children}</div>

function SideBar() {
  return (
    <div className="flex h-[1362px] flex-1 flex-col items-center bg-[#f0f0f0] text-[17px] text-[#2040a0]">
      {sideIcons.map((ic, i) => <Slot key={i}>{ic}</Slot>)}
      <div className="my-[4px] h-[2px] w-[24px] shrink-0 bg-[#b0b0b0]" />
      {sideIcons2.map((ic, i) => <Slot key={i}>{ic}</Slot>)}
      <div className="my-[5px] h-[2px] w-[24px] shrink-0 bg-[#b0b0b0]" />
      {sideIcons3.map((ic, i) => <Slot key={i}>{ic}</Slot>)}
      {['1', '5', '15', '30', '60'].map(t => <Slot key={t}>{t}</Slot>)}
      <div className="flex h-[34px] w-[33px] shrink-0 items-center justify-center border-l-2 border-t-2 border-[#909090] bg-[#fafafa] text-[18px]">日</div>
      {['周', '月', 'N', '多', '季', '年'].map(t => <Slot key={t}>{t}</Slot>)}
    </div>
  )
}

const extTabs: [string, string, string][] = [['扩展∧', 'w-[60px]', 'text-[#c0c0c0]'], ['关联报价', 'w-[85px]', 'text-[#c0c0c0]'], ['盘面分析', 'w-[83px]', 'text-[#c8c800]'], ['境外资金', 'w-[84px]', 'text-[#c8c800]'], ['综合资讯', 'w-[85px]', 'text-[#c8c800]'], ['行业资讯', 'w-[83px]', 'text-[#c8c800]']]

function ExtRow() {
  return (
    <div className="flex h-[28px] w-[2124px] shrink-0 items-center border-y-2 border-[#a80000] text-[18px]">
      {extTabs.map(([t, w, c]) => (
        <div key={t} className={`flex h-full shrink-0 items-center justify-center whitespace-nowrap border-r border-[#a80000] pt-[2px] ${w} ${c}`}>{t}</div>
      ))}
      <div className="ml-auto flex h-full">
        <div className="flex h-full w-[70px] items-center justify-center whitespace-nowrap border-x border-[#a80000] pt-[2px] text-[17px] text-[#c8c800]">图文F10</div>
        <div className="flex h-full w-[77px] items-center justify-center whitespace-nowrap border-r border-[#a80000] pt-[2px] text-[17px] text-[#c8c800]">侧边栏《</div>
        {['笔', '价', '细', '势'].map(t => (
          <div key={t} className={`flex h-full w-[43px] items-center justify-center border-r border-[#a80000] pt-[2px] ${t === '笔' ? 'text-[#20e8e8]' : 'text-[#c0c0c0]'}`}>{t}</div>
        ))}
        <div className="h-full w-[180px]" />
      </div>
    </div>
  )
}

const statusCells: [string, string, string][] = [
  ['上证', 'w-[54px]', 'text-[24px] text-[#c8c8c8]'], ['3251.85', 'w-[101px]', 'text-[#ff1010]'], ['15.15', 'w-[75px]', 'text-[#ff1010]'], ['0.47%', 'w-[86px]', 'text-[#ff1010]'], ['4140亿', 'w-[96px]', 'font-bold text-[#e0e0e0]'],
  ['沪深', 'w-[54px]', 'text-[24px] text-[#c8c8c8]'], ['4230.77', 'w-[102px]', 'text-[#ff1010]'], ['21.67', 'w-[75px]', 'text-[#ff1010]'], ['0.51%', 'w-[85px]', 'text-[#ff1010]'], ['2291亿', 'w-[97px]', 'font-bold text-[#e0e0e0]'],
  ['创业', 'w-[53px]', 'text-[24px] text-[#c8c8c8]'], ['2569.91', 'w-[102px]', 'text-[#00c840]'], ['-8.62', 'w-[73px]', 'text-[#00c840]'], ['-0.33%', 'w-[87px]', 'text-[#00c840]'], ['1718亿', 'w-[97px]', 'font-bold text-[#e0e0e0]'],
]

function StatusBar() {
  return (
    <div className="flex h-[33px] w-[2160px] shrink-0 items-center bg-gradient-to-b from-[#303030] to-[#080808] pt-[2px] text-[20px]">
      {statusCells.map(([t, w, c], i) => (
        <div key={i} className={`shrink-0 whitespace-nowrap ${w} ${c}`}>{t}</div>
      ))}
      <div className="flex h-full w-[163px] shrink-0 items-center gap-[12px] whitespace-nowrap border-l border-[#484848] pl-[5px] font-bold text-[#e0e0e0]">
        <span className="text-[24px] font-normal text-[#c8c8c8]">总成交</span>
        <span>9264亿</span>
      </div>
      <div className="flex h-full flex-1 items-center whitespace-nowrap border-l border-[#484848] pl-[8px] text-[17px] text-[#c0c0c0]">上证云行情J042</div>
    </div>
  )
}

function Watermark() {
  return (
    <div className="absolute right-0 bottom-0 flex h-[57px] w-[222px] flex-col items-center bg-white">
      <div className="flex h-[30px] shrink-0 items-center gap-[6px] pt-[3px]">
        <span className="text-[21px] font-bold whitespace-nowrap text-[#0820e8]">股海网</span>
        <span className="text-[16px] tracking-[2px] whitespace-nowrap text-[#303030]">股票软件资源分享</span>
      </div>
      <span className="text-[23px] leading-[22px] font-bold whitespace-nowrap text-[#e83010]">Www.Guhai.com.cn</span>
    </div>
  )
}

export default function App() {
  return (
    <div className="relative flex h-[1395px] w-[2160px] flex-col overflow-hidden bg-black [font-family:'Liberation_Sans','Noto_Sans_CJK_SC',sans-serif]">
      <TitleBar />
      <div className="flex h-[1362px] shrink-0 items-start">
        <div className="flex h-[1362px] w-[2124px] shrink-0 flex-col">
          <div className="flex h-[1301px] shrink-0">
            <LeftTabs />
            <div className="flex h-full w-[1745px] shrink-0 flex-col border-r-2 border-[#a80000]">
              <Toolbar />
              <HeaderRow />
              <PriceChart />
              <div className="h-[2px] shrink-0 bg-[#a80000]" />
              <LowerTitle />
              <LowerChart />
              <div className="h-[2px] shrink-0 bg-[#a80000]" />
              <DateAxis />
              <IndicatorTabs />
            </div>
            <QuotePanel />
          </div>
          <ExtRow />
          <StatusBar />
        </div>
        <SideBar />
      </div>
      <Watermark />
    </div>
  )
}
